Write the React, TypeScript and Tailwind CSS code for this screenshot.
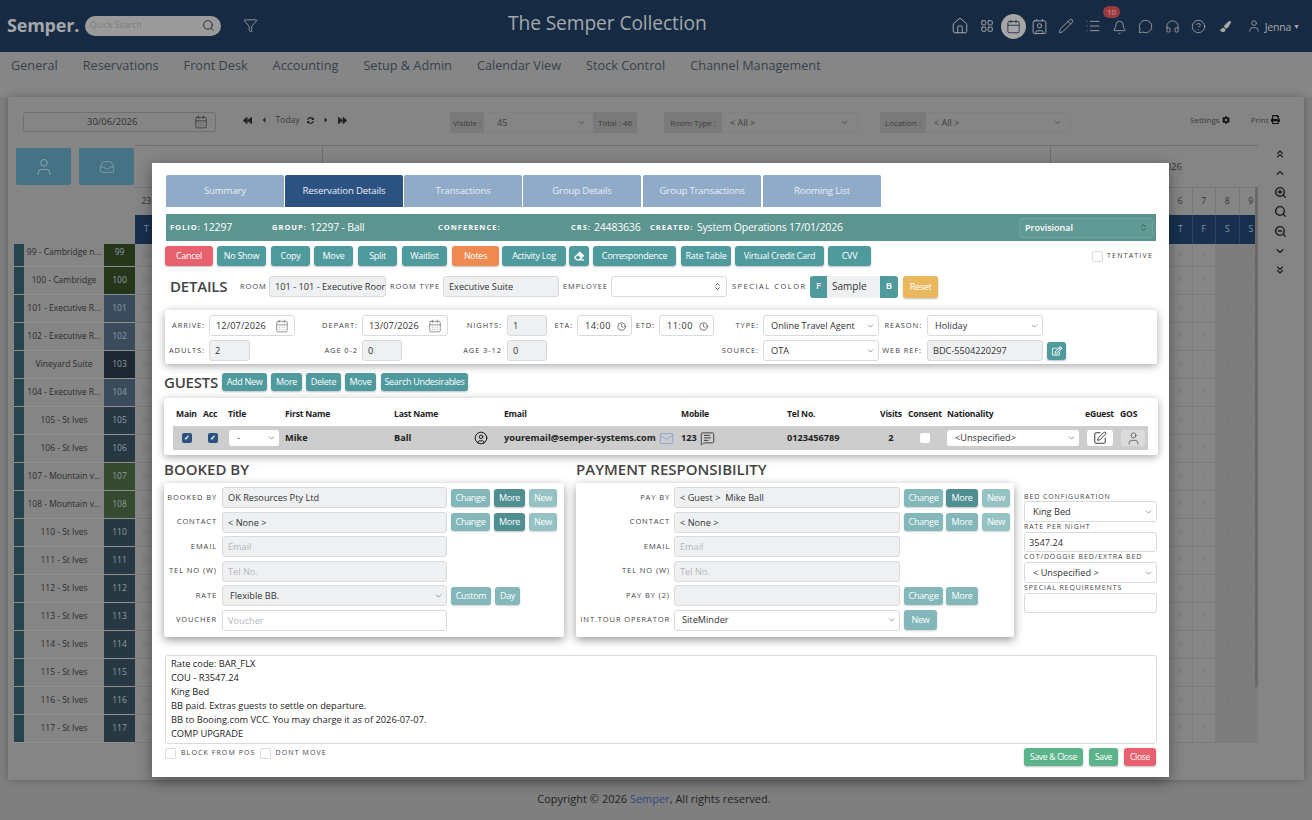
import React from "react";
import { twMerge } from "tailwind-merge";
import {
  Home, LayoutGrid, Calendar, CalendarDays, Contact, Pencil, List, Bell, MessageCircle, Headphones, CircleHelp, User, Search, Filter,
  ChevronsUp, ChevronUp, ZoomIn, ZoomOut, ChevronDown, ChevronsDown, Mail, Inbox, Clock, CircleUser, MessageSquareText, SquarePen, ChevronsUpDown,
} from "lucide-react";
import { FaBackward, FaForward, FaCaretLeft, FaCaretRight, FaSyncAlt, FaCog, FaPrint, FaEraser, FaPaintBrush, FaRegEdit } from "react-icons/fa";

const cx = (...a: (string | false | undefined)[]) => twMerge(a.filter(Boolean).join(" "));

function Label({ className, children }: { className?: string; children: React.ReactNode }) {
  return <span className={cx("text-[7.5px] tracking-[0.9px] uppercase text-[#444] whitespace-nowrap text-right shrink-0", className)}>{children}</span>;
}

function Btn({ className, children }: { className?: string; children: React.ReactNode }) {
  return (
    <button className={cx("h-[20px] rounded-[3px] bg-[#4f9a9c] text-white text-[9px] tracking-[-0.3px] flex items-center justify-center shrink-0 shadow-[0_1px_2px_rgba(0,0,0,0.25)]", className)}>
      {children}
    </button>
  );
}

function Box({ className, children, muted, placeholder }: { className?: string; children?: React.ReactNode; muted?: boolean; placeholder?: boolean }) {
  return (
    <div className={cx("h-[21px] rounded-[3px] border border-[#d8dbde] flex items-center px-[5px] pt-[1px] text-[9.2px] overflow-hidden whitespace-nowrap shrink-0", muted ? "bg-[#eef0f2]" : "bg-white", placeholder ? "text-[#b5b8bb]" : "text-[#333]", className)}>
      {children}
    </div>
  );
}

function Sel({ className, value, inner }: { className?: string; value: string; inner?: string }) {
  return (
    <div className={cx("relative h-[21px] rounded-[3px] border border-[#d8dbde] bg-white shrink-0 flex items-center", className)}>
      <select defaultValue={value} className={cx("block w-full h-[14px] appearance-none bg-transparent pl-[7px] py-0 leading-[14px] text-[9.2px] text-[#333]", inner)}>
        <option>{value}</option>
      </select>
      <ChevronDown size={9} strokeWidth={1.6} className="absolute right-[3px] top-1/2 -translate-y-1/2 text-[#555] pointer-events-none" />
    </div>
  );
}

function DateBox({ className, value }: { className?: string; value: string }) {
  return (
    <Box className={cx("justify-between tracking-[0.1px]", className)}>
      <span className="pl-[1px]">{value}</span>
      <CalendarDays size={14} strokeWidth={1.3} className="text-[#777]" />
    </Box>
  );
}

function TimeBox({ className, value }: { className?: string; value: string }) {
  return (
    <Box className={cx("justify-between pl-[7px]", className)}>
      <span className="tracking-[0.5px]">{value}</span>
      <Clock size={9} strokeWidth={1.6} className="text-[#222]" />
    </Box>
  );
}

const TAB = "w-[118px] h-[32px] flex items-center justify-center text-[9.7px] tracking-[-0.2px] text-[#e8eef5] bg-[#8fabc8] rounded-t-[2px]";

const IconCell = ({ children, className }: { children: React.ReactNode; className?: string }) => (
  <div className={cx("w-[26.5px] flex justify-center", className)}>{children}</div>
);

function TopBar() {
  return (
    <header className="h-[52px] bg-[#172a43] flex items-center text-[#a9a9a9]">
      <div className="w-[508px] flex items-center shrink-0 -mt-[1px]">
        <span className="ml-[7px] w-[78px] text-[18px] font-bold tracking-[-0.2px] text-[#a3a7ac]">Semper.</span>
        <div className="w-[136px] h-[20px] rounded-full bg-[#9b9b9b] flex items-center justify-between pl-[5px] pr-[6px]">
          <span className="text-[8.5px] text-[#7d7d7d]">Quick Search</span>
          <Search size={13} strokeWidth={1.6} className="text-[#222]" />
        </div>
        <Filter size={15} strokeWidth={1.3} className="ml-[22px] text-[#a9a9a9]" />
      </div>
      <div className="text-[19.2px] text-[#a3a7ac] font-medium tracking-[-0.1px] -mt-[6px]">The Semper Collection</div>
      <div className="ml-auto flex items-center pr-[12px]">
        <IconCell><Home size={18} strokeWidth={1.3} /></IconCell>
        <IconCell><LayoutGrid size={14} strokeWidth={1.6} /></IconCell>
        <IconCell className="items-center">
          <div className="w-[25px] h-[25px] rounded-full bg-[#a6a6a6] flex items-center justify-center">
            <Calendar size={15} strokeWidth={1.4} className="text-[#1f2f46]" />
          </div>
        </IconCell>
        <IconCell><Contact size={17} strokeWidth={1.3} /></IconCell>
        <IconCell><Pencil size={16} strokeWidth={1.3} /></IconCell>
        <IconCell><List size={16} strokeWidth={1.3} /></IconCell>
        <IconCell className="relative">
          <Bell size={15} strokeWidth={1.3} className="mt-[2px]" />
          <span className="absolute left-[-3px] top-[-12px] w-[17px] h-[12px] rounded-full bg-[#9d3a40] text-[#c99] text-[8px] flex items-center justify-center">10</span>
        </IconCell>
        <IconCell><MessageCircle size={15} strokeWidth={1.3} /></IconCell>
        <IconCell><Headphones size={15} strokeWidth={1.3} /></IconCell>
        <IconCell><CircleHelp size={15} strokeWidth={1.3} /></IconCell>
        <IconCell><FaPaintBrush size={11} /></IconCell>
        <div className="w-[22px] ml-[4px] flex justify-center"><User size={14} strokeWidth={1.3} /></div>
        <span className="text-[10.5px] tracking-[-0.2px] mt-[3px]">Jenna</span>
        <span className="text-[7px] ml-[2px] mt-[3px]">▼</span>
      </div>
    </header>
  );
}

const NAV = ["General", "Reservations", "Front Desk", "Accounting", "Setup & Admin", "Calendar View", "Stock Control", "Channel Management"];

const ROOMS: [string, string, string][] = [
  ["99 - Cambridge n...", "99", "bg-[#25361b]"],
  ["100 - Cambridge", "100", "bg-[#25361b]"],
  ["101 - Executive R...", "101", "bg-[#3a4c5b]"],
  ["102 - Executive R...", "102", "bg-[#3a4c5b]"],
  ["Vineyard Suite", "103", "bg-[#1e2833]"],
  ["104 - Executive R...", "104", "bg-[#3a4c5b]"],
  ["105 - St Ives", "105", "bg-[#283842]"],
  ["106 - St Ives", "106", "bg-[#283842]"],
  ["107 - Mountain v...", "107", "bg-[#354a2e]"],
  ["108 - Mountain v...", "108", "bg-[#354a2e]"],
  ["110 - St Ives", "110", "bg-[#283842]"],
  ["111 - St Ives", "111", "bg-[#283842]"],
  ["112 - St Ives", "112", "bg-[#283842]"],
  ["113 - St Ives", "113", "bg-[#283842]"],
  ["114 - St Ives", "114", "bg-[#283842]"],
  ["115 - St Ives", "115", "bg-[#283842]"],
  ["116 - St Ives", "116", "bg-[#283842]"],
  ["117 - St Ives", "117", "bg-[#283842]"],
];

const DOW = ["S", "M", "T", "W", "T", "F", "S"];
const COLS = Array.from({ length: 48 }, (_, i) => {
  const d = new Date(2026, 5, 23 + i);
  return { n: d.getDate(), w: DOW[d.getDay()], we: d.getDay() === 0 || d.getDay() === 6 };
});

function Backdrop() {
  return (
    <div className="bg-[#7f7f7f] h-[768px]">
      <nav className="h-[45px] flex items-start pl-[11px] pt-[3.5px] gap-[25px] text-[12.7px] text-[#36414d] bg-[#868686]">
        {NAV.map((n) => <span key={n} className="leading-[18px]">{n}</span>)}
      </nav>
      <section className="mx-[8px] h-[683px] bg-[#858585] shadow-[0_0_8px_rgba(0,0,0,0.25)] text-[#3c3c3c]">
        <div className="h-[48px] pt-[15px] pl-[15px] flex items-start text-[8px]">
          <div className="w-[193px] h-[20px] border border-[#6f6f6f] rounded-[3px] flex items-center justify-between pl-[63px] pr-[7px] text-[9.5px] text-[#2f2f2f]">
            <span>30/06/2026</span>
            <CalendarDays size={14} strokeWidth={1.3} className="text-[#333]" />
          </div>
          <div className="ml-[27px] w-[104px] h-[16px] flex items-center justify-between text-[#222]">
            <FaBackward size={9} /><FaCaretLeft size={8} /><span className="text-[8.5px] text-[#3c3c3c]">Today</span><FaSyncAlt size={7} /><FaCaretRight size={8} /><FaForward size={9} />
          </div>
          <div className="ml-[103px] w-[187px] h-[21px] flex bg-[#858585]">
            <div className="w-[34px] bg-[#7a7a7a] flex items-center justify-center">Visible :</div>
            <div className="flex-1 border-y border-[#808080] flex items-center justify-between pl-[13px] pr-[7px] text-[9px]"><span>45</span><ChevronDown size={9} /></div>
            <div className="w-[44px] bg-[#7a7a7a] flex items-center justify-center">Total : 46</div>
          </div>
          <div className="ml-[27px] w-[194px] h-[21px] flex">
            <div className="w-[58px] bg-[#7a7a7a] flex items-center justify-center">Room Type :</div>
            <div className="flex-1 border-y border-r border-[#808080] flex items-center justify-between px-[8px] text-[9px]"><span>&lt; All &gt;</span><ChevronDown size={9} /></div>
          </div>
          <div className="ml-[22px] w-[191px] h-[21px] flex">
            <div className="w-[46px] bg-[#7a7a7a] flex items-center justify-center">Location :</div>
            <div className="flex-1 border-y border-r border-[#808080] flex items-center justify-between px-[8px] text-[9px]"><span>&lt; All &gt;</span><ChevronDown size={9} /></div>
          </div>
          <div className="ml-[119px] flex items-center gap-[2px] h-[15px]">Settings <FaCog size={8} className="text-[#111]" /></div>
          <div className="ml-[21px] flex items-center gap-[2px] h-[15px]">Print <FaPrint size={9} className="text-[#111]" /></div>
        </div>
        <div className="flex">
          <div className="ml-[6px] w-[121px] shrink-0">
            <div className="h-[99px] pt-[3px] pl-[2px] flex gap-[8px] items-start">
              <div className="w-[55px] h-[37px] rounded-[2px] bg-[#457385] flex items-center justify-center"><User size={20} strokeWidth={1.1} className="text-[#8fa7b3]" /></div>
              <div className="w-[55px] h-[37px] rounded-[2px] bg-[#457385] flex items-center justify-center"><Inbox size={16} strokeWidth={1.1} className="text-[#8fa7b3]" /></div>
            </div>
            {ROOMS.map(([name, no, c], i) => (
              <div key={no} className={cx("flex text-[8.5px] border-b border-[#8f8f8f]", i === 0 ? "h-[23px]" : "h-[28px]")}>
                <div className="w-[10px] bg-[#27434d]" />
                <div className={cx("w-[80px] flex items-center justify-center whitespace-nowrap text-[#2c2c2c]", i === 0 && "pb-[5px]")}>{name}</div>
                <div className={cx("w-[31px] flex items-center justify-center text-[#8d9ca5]", c, i === 0 && "pb-[5px]")}>{no}</div>
              </div>
            ))}
          </div>
          <div className="relative w-[1123px] shrink-0 overflow-hidden">
            <div className="h-[42px] flex border-t border-[#6f6f6f] text-[9.5px] text-[#333]">
              <div className="w-[188px] border-r border-[#6f6f6f] pt-[14px] text-center">June 2026</div>
              <div className="w-[728px] border-r border-[#6f6f6f] pt-[14px] text-center">July 2026</div>
              <div className="w-[207px] pt-[14px] text-center">August 2026</div>
            </div>
            <div className="grid grid-cols-[repeat(48,23.5px)] h-[28px] border-t border-[#787878] text-[8.5px] text-[#333]">
              {COLS.map((c, i) => <div key={i} className="border-r border-[#787878] flex items-center justify-center">{c.n}</div>)}
            </div>
            <div className="grid grid-cols-[repeat(48,23.5px)] h-[29px] bg-[#18304e] text-[8.5px] text-[#7f93a8]">
              {COLS.map((c, i) => <div key={i} className="border-r border-[#2c4766] flex items-center justify-center">{c.w}</div>)}
            </div>
            {ROOMS.map(([, no], r) => (
              <div key={no} className={cx("grid grid-cols-[repeat(48,23.5px)] text-[7px] text-[#777]", r === 0 ? "h-[23px]" : "h-[28px]")}>
                {COLS.map((c, i) => (
                  <div key={i} className={cx("border-r border-b border-[#7c7c7c] flex items-center justify-center", c.we ? "bg-[#7d7d7d]" : "bg-[#868686]")}>{c.n}</div>
                ))}
              </div>
            ))}
            <div className="absolute right-0 top-[42px] w-[3px] h-[500px] bg-[#6a6a6a]" />
          </div>
          <div className="w-[20px] ml-[12px] h-[128px] mt-[3px] flex flex-col items-center justify-between text-[#1c1c1c] shrink-0">
            <ChevronsUp size={12} strokeWidth={2.2} />
            <ChevronUp size={12} strokeWidth={2.2} />
            <ZoomIn size={13} strokeWidth={2.6} />
            <Search size={13} strokeWidth={2.6} />
            <ZoomOut size={13} strokeWidth={2.6} />
            <ChevronDown size={12} strokeWidth={2.2} />
            <ChevronsDown size={12} strokeWidth={2.2} />
          </div>
        </div>
      </section>
    </div>
  );
}

const GUEST_GRID = "grid grid-cols-[27px_25px_57px_109px_110px_177px_106px_93px_28px_39px_138px_35px_31px]";
const BAR_LABEL = "text-[7.5px] tracking-[1px] font-bold";
const H3 = "h-[16px] leading-[16px] text-[15px] font-semibold text-[#444] whitespace-nowrap";
const CARD = "mt-[6px] h-[154px] rounded-[2px] bg-white shadow-[0_3px_10px_rgba(0,0,0,0.4)] pt-[4px] flex flex-col gap-[3.5px]";
const ROW = "flex items-center h-[21px]";
const SMALL = "h-[18px] opacity-70";

function Modal() {
  return (
    <div className="absolute left-[152px] top-[163px] w-[1017px] h-[614px] bg-white shadow-[0_4px_14px_rgba(0,0,0,0.4)] pl-[14px] pr-[13px] pt-[12px]">
      {/* tabs */}
      <div className="flex gap-[1px]">
        <div className={TAB}>Summary</div>
        <div className={cx(TAB, "bg-[#2c5282]")}>Reservation Details</div>
        <div className={TAB}>Transactions</div>
        <div className={TAB}>Group Details</div>
        <div className={cx(TAB, "ml-[1px]")}>Group Transactions</div>
        <div className={cx(TAB, "ml-[1px]")}>Rooming List</div>
      </div>
      {/* teal bar */}
      <div className="mt-[7px] h-[27px] bg-[#5c9590] flex items-center text-white text-[10.5px] tracking-[-0.2px]">
        <b className={cx("ml-[4px] w-[33px]", BAR_LABEL)}>FOLIO:</b><span className="w-[69px]">12297</span>
        <b className={cx("w-[38px]", BAR_LABEL)}>GROUP:</b><span className="w-[128px]">12297 - Ball</span>
        <b className={cx("w-[133px]", BAR_LABEL)}>CONFERENCE:</b>
        <b className={cx("w-[23px]", BAR_LABEL)}>CRS:</b><span className="w-[56px]">24483636</span>
        <b className={cx("w-[47px]", BAR_LABEL)}>CREATED:</b><span className="w-[322px]">System Operations 17/01/2026</span>
        <div className="w-[134px] h-[20px] rounded-[3px] bg-[#5f9a95] border border-[#6ea5a0] flex items-center justify-between pl-[5px] pr-[4px] text-[9px] font-semibold tracking-normal">
          <span>Provisional</span><ChevronsUpDown size={9} strokeWidth={2.2} className="text-[#2f4f4c]" />
        </div>
      </div>
      {/* action buttons */}
      <div className="mt-[5px] -ml-[1px] flex items-center">
        <Btn className="w-[48px] bg-[#e7626e]">Cancel</Btn>
        <Btn className="w-[49px] ml-[4px]">No Show</Btn>
        <Btn className="w-[39px] ml-[5px]">Copy</Btn>
        <Btn className="w-[39px] ml-[4px]">Move</Btn>
        <Btn className="w-[39px] ml-[5px]">Split</Btn>
        <Btn className="w-[45px] ml-[5px]">Waitlist</Btn>
        <Btn className="w-[47px] ml-[5px] bg-[#ee8a4f]">Notes</Btn>
        <Btn className="w-[64px] ml-[3px]">Activity Log</Btn>
        <Btn className="w-[20px] ml-[3px]"><FaEraser size={10} /></Btn>
        <Btn className="w-[83px] ml-[4px]">Correspondence</Btn>
        <Btn className="w-[50px] ml-[5px]">Rate Table</Btn>
        <Btn className="w-[89px] ml-[4px]">Virtual Credit Card</Btn>
        <Btn className="w-[43px] ml-[4px]">CVV</Btn>
        <div className="ml-auto flex items-center mr-[3px]">
          <span className="w-[11px] h-[11px] rounded-[2px] border border-[#d8dbde]" />
          <Label className="ml-[4px] tracking-[1.2px] text-[7px]">TENTATIVE</Label>
        </div>
      </div>
      {/* details row */}
      <div className="mt-[10px] flex items-center h-[21px]">
        <span className="ml-[4px] w-[70px] text-[15px] font-semibold text-[#444] tracking-[-0.2px]">DETAILS</span>
        <Label className="w-[25px] text-left">ROOM</Label>
        <Box muted className="ml-[4px] w-[117px] text-[#333]">101 - 101 - Executive Room</Box>
        <Label className="ml-[4px] w-[48px] text-left">ROOM TYPE</Label>
        <Box muted className="ml-[5px] w-[116px]">Executive Suite</Box>
        <Label className="ml-[4px] w-[44px] text-left">EMPLOYEE</Label>
        <div className="ml-[4px] w-[116px] h-[21px] border border-[#d8dbde] rounded-[3px] flex items-center justify-end pr-[4px]"><ChevronsUpDown size={9} strokeWidth={2} className="text-[#333]" /></div>
        <Label className="ml-[5px] w-[73px] text-left tracking-[1.5px]">SPECIAL COLOR</Label>
        <div className="ml-[5px] flex w-[88px] h-[22px] rounded-[3px] overflow-hidden text-[10px]">
          <span className="w-[17px] bg-[#4f9a9c] text-white text-[9.5px] font-semibold flex items-center justify-center">F</span>
          <span className="flex-1 bg-[#eef0f2] flex items-center pl-[5px] text-[#333]">Sample</span>
          <span className="w-[18px] bg-[#4f9a9c] text-white text-[9.5px] font-semibold flex items-center justify-center">B</span>
        </div>
        <Btn className="ml-[5px] w-[35px] h-[22px] bg-[#eab85c]">Reset</Btn>
      </div>
      {/* details card */}
      <div className="mt-[13px] -ml-[1px] w-[992px] h-[54px] rounded-[3px] bg-white shadow-[0_2px_8px_rgba(0,0,0,0.35)] pt-[5px] flex flex-col gap-[4px]">
        <div className="flex items-center">
          <Label className="w-[40px]">ARRIVE:</Label>
          <DateBox className="ml-[4px] w-[86px]" value="12/07/2026" />
          <Label className="w-[63px]">DEPART:</Label>
          <DateBox className="ml-[4px] w-[86px]" value="13/07/2026" />
          <Label className="w-[54px]">NIGHTS:</Label>
          <Box muted className="ml-[5px] w-[40px]">1</Box>
          <Label className="w-[26px]">ETA:</Label>
          <TimeBox className="ml-[4px] w-[55px]" value="14:00" />
          <Label className="w-[23px]">ETD:</Label>
          <TimeBox className="ml-[4px] w-[55px]" value="11:00" />
          <Label className="w-[45px]">TYPE:</Label>
          <Sel className="ml-[4px] w-[116px]" value="Online Travel Agent" />
          <Label className="w-[43px]">REASON:</Label>
          <Sel className="ml-[5px] w-[116px]" value="Holiday" />
        </div>
        <div className="flex items-center">
          <Label className="w-[40px]">ADULTS:</Label>
          <Box muted className="ml-[4px] w-[41px]">2</Box>
          <Label className="w-[108px]">AGE 0-2</Label>
          <Box muted className="ml-[4px] w-[40px]">0</Box>
          <Label className="w-[100px]">AGE 3-12</Label>
          <Box muted className="ml-[5px] w-[40px]">0</Box>
          <Label className="w-[212px]">SOURCE:</Label>
          <Sel className="ml-[4px] w-[116px]" value="OTA" />
          <Label className="w-[43px]">WEB REF:</Label>
          <Box muted className="ml-[5px] w-[116px]">BDC-5504220297</Box>
          <Btn className="ml-[4px] w-[19px] h-[18px]"><FaRegEdit size={10} /></Btn>
        </div>
      </div>
      {/* guests heading */}
      <div className="mt-[9px] -ml-[2px] h-[18px] flex items-center">
        <span className="w-[58px] text-[15px] font-semibold text-[#444] tracking-[-0.2px]">GUESTS</span>
        <Btn className="w-[45px] h-[18px]">Add New</Btn>
        <Btn className="w-[31px] h-[18px] ml-[4px]">More</Btn>
        <Btn className="w-[35px] h-[18px] ml-[4px]">Delete</Btn>
        <Btn className="w-[31px] h-[18px] ml-[4px]">Move</Btn>
        <Btn className="w-[87px] h-[18px] ml-[5px]">Search Undesirables</Btn>
      </div>
      {/* guests card */}
      <div className="mt-[7px] -ml-[2px] w-[994px] h-[57px] rounded-[3px] bg-white shadow-[0_2px_8px_rgba(0,0,0,0.35)] pl-[9px] pr-[10px] pt-[7px]">
        <div className={cx(GUEST_GRID, "h-[19px] mb-[2px] text-[8.6px] font-bold text-[#222] items-center")}>
          {["Main", "Acc", "Title", "First Name", "Last Name", "Email", "Mobile", "Tel No.", "Visits", "Consent", "Nationality", "eGuest", "GOS"].map((h) => (
            <span key={h} className="h-full flex items-center whitespace-nowrap tracking-[-0.2px] pl-[3px]">{h}</span>
          ))}
        </div>
        <div className={cx(GUEST_GRID, "h-[24px] bg-[#cdcdcd] text-[9.2px] font-bold text-[#222] items-center")}>
          <span className="flex justify-center"><span className="w-[10px] h-[10px] rounded-[2px] bg-[#2c5282] text-white text-[7px] leading-[10px] text-center">✓</span></span>
          <span className="flex justify-center"><span className="w-[10px] h-[10px] rounded-[2px] bg-[#2c5282] text-white text-[7px] leading-[10px] text-center">✓</span></span>
          <Sel className="ml-[4px] w-[50px] h-[16px] border-0" inner="pl-[8px] font-normal" value="-" />
          <span className="pl-[3px]">Mike</span>
          <span className="pl-[3px] flex items-center justify-between pr-[13px]">Ball<CircleUser size={14} strokeWidth={1.6} className="text-[#111]" /></span>
          <span className="pl-[3px] flex items-center whitespace-nowrap">youremail@semper-systems.com</span>
          <span className="pl-[3px] flex items-center gap-[3px] relative">123 <MessageSquareText size={15} strokeWidth={1.3} className="text-[#222]" /><Mail size={15} strokeWidth={1} className="absolute left-[-19px] top-[0px] text-[#6f8fd6]" /></span>
          <span className="pl-[3px]">0123456789</span>
          <span className="text-center">2</span>
          <span className="flex justify-center"><span className="w-[10px] h-[10px] rounded-[2px] bg-white" /></span>
          <Sel className="ml-[3px] w-[132px] h-[16px] border-0" inner="pl-[8px] font-normal" value="<Unspecified>" />
          <span className="pl-[5px]"><span className="w-[26px] h-[16px] rounded-[3px] bg-white flex items-center justify-center"><SquarePen size={14} strokeWidth={1.5} className="text-[#222]" /></span></span>
          <span className="pl-[4px]"><span className="w-[24px] h-[16px] rounded-[3px] bg-[#dcdcdc] flex items-center justify-center"><User size={15} strokeWidth={1.1} className="text-[#444]" /></span></span>
        </div>
      </div>
      {/* lower */}
      <div className="mt-[6px] -ml-[2px] flex items-start">
        <div className="w-[400px] shrink-0">
          <h3 className={H3}>BOOKED BY</h3>
          <div className={CARD}>
            <div className={ROW}><Label className="w-[53px]">BOOKED BY</Label><Box muted className="ml-[5px] w-[225px]">OK Resources Pty Ltd</Box><Btn className={cx("ml-[4px] w-[39px]", SMALL)}>Change</Btn><Btn className="ml-[4px] w-[31px] h-[18px] bg-[#4f8f92]">More</Btn><Btn className={cx("ml-[4px] w-[28px]", SMALL, "opacity-60")}>New</Btn></div>
            <div className={ROW}><Label className="w-[53px]">CONTACT</Label><Box muted className="ml-[5px] w-[225px]">&lt; None &gt;</Box><Btn className={cx("ml-[4px] w-[39px]", SMALL)}>Change</Btn><Btn className="ml-[4px] w-[31px] h-[18px] bg-[#4f8f92]">More</Btn><Btn className={cx("ml-[4px] w-[28px]", SMALL, "opacity-60")}>New</Btn></div>
            <div className={ROW}><Label className="w-[53px]">EMAIL</Label><Box muted placeholder className="ml-[5px] w-[225px]">Email</Box></div>
            <div className={ROW}><Label className="w-[53px]">TEL NO (W)</Label><Box muted placeholder className="ml-[5px] w-[225px]">Tel No.</Box></div>
            <div className={ROW}><Label className="w-[53px]">RATE</Label><Sel className="ml-[5px] w-[225px] bg-[#eef0f2]" value="Flexible BB." /><Btn className={cx("ml-[4px] w-[40px]", SMALL)}>Custom</Btn><Btn className={cx("ml-[4px] w-[25px]", SMALL)}>Day</Btn></div>
            <div className={ROW}><Label className="w-[53px]">VOUCHER</Label><Box placeholder className="ml-[5px] w-[225px]">Voucher</Box></div>
          </div>
        </div>
        <div className="ml-[12px] w-[438px] shrink-0">
          <h3 className={H3}>PAYMENT RESPONSIBILITY</h3>
          <div className={CARD}>
            <div className={ROW}><Label className="w-[94px]">PAY BY</Label><Box muted className="ml-[4px] w-[226px]">&lt; Guest &gt;&nbsp; Mike Ball</Box><Btn className={cx("ml-[4px] w-[39px]", SMALL)}>Change</Btn><Btn className="ml-[3px] w-[32px] h-[18px] bg-[#4f8f92]">More</Btn><Btn className={cx("ml-[4px] w-[28px]", SMALL, "opacity-60")}>New</Btn></div>
            <div className={ROW}><Label className="w-[94px]">CONTACT</Label><Box muted className="ml-[4px] w-[226px]">&lt; None &gt;</Box><Btn className={cx("ml-[4px] w-[39px]", SMALL)}>Change</Btn><Btn className={cx("ml-[3px] w-[32px]", SMALL)}>More</Btn><Btn className={cx("ml-[4px] w-[28px]", SMALL, "opacity-60")}>New</Btn></div>
            <div className={ROW}><Label className="w-[94px]">EMAIL</Label><Box muted placeholder className="ml-[4px] w-[226px]">Email</Box></div>
            <div className={ROW}><Label className="w-[94px]">TEL NO (W)</Label><Box muted placeholder className="ml-[4px] w-[226px]">Tel No.</Box></div>
            <div className={ROW}><Label className="w-[94px]">PAY BY (2)</Label><Box muted className="ml-[4px] w-[226px]" /><Btn className={cx("ml-[4px] w-[39px]", SMALL)}>Change</Btn><Btn className={cx("ml-[3px] w-[32px]", SMALL)}>More</Btn></div>
            <div className={ROW}><Label className="w-[94px]">INT.TOUR OPERATOR</Label><Sel className="ml-[4px] w-[226px]" value="SiteMinder" /><Btn className="ml-[4px] w-[33px] h-[20px] opacity-70">New</Btn></div>
          </div>
        </div>
        <div className="ml-[10px] w-[133px] shrink-0 pt-[31px] flex flex-col">
          <Label className="text-left h-[9px] leading-[9px] text-[7px]">BED CONFIGURATION</Label>
          <Sel className="w-[133px]" inner="pl-[8px]" value="King Bed" />
          <Label className="text-left h-[10px] leading-[10px] text-[7px]">RATE PER NIGHT</Label>
          <Box className="w-[133px] h-[20px] pl-[4px]">3547.24</Box>
          <Label className="text-left h-[10px] leading-[10px] text-[7px]">COT/DOGGIE BED/EXTRA BED</Label>
          <Sel className="w-[133px]" inner="pl-[8px]" value="< Unspecified >" />
          <Label className="text-left h-[10px] leading-[10px] text-[7px]">SPECIAL REQUIREMENTS</Label>
          <Box className="w-[133px] h-[20px]" />
        </div>
      </div>
      {/* notes */}
      <div className="mt-[18px] -ml-[1px] w-[992px] h-[89px] border border-[#d8dbde] rounded-[3px] px-[5px] pt-[1px] text-[9.3px] leading-[14px] text-[#222]">
        <div>Rate code: BAR_FLX</div>
        <div>COU - R3547.24</div>
        <div>King Bed</div>
        <div>BB paid. Extras guests to settle on departure.</div>
        <div>BB to Booing.com VCC. You may charge it as of 2026-07-07.</div>
        <div>COMP UPGRADE</div>
      </div>
      <div className="mt-[3px] -ml-[1px] w-[991px] flex items-start">
        <div className="flex items-center h-[13px]">
          <span className="w-[11px] h-[11px] rounded-[2px] border border-[#d8dbde]" />
          <Label className="ml-[5px] tracking-[1.1px] text-[7px]">BLOCK FROM POS</Label>
          <span className="ml-[4px] w-[11px] h-[11px] rounded-[2px] border border-[#d8dbde]" />
          <Label className="ml-[5px] tracking-[1.1px] text-[7px]">DONT MOVE</Label>
        </div>
        <Btn className="ml-auto mt-[1px] w-[59px] h-[18px] bg-[#5cb58a] text-[8.5px]">Save &amp; Close</Btn>
        <Btn className="ml-[6px] mt-[1px] w-[29px] h-[18px] bg-[#5cb58a] text-[8.5px]">Save</Btn>
        <Btn className="ml-[6px] mt-[1px] w-[32px] h-[18px] bg-[#e7626e] text-[8.5px]">Close</Btn>
      </div>
    </div>
  );
}

export default function App() {
  return (
    <div className="relative w-[1312px] h-[820px] overflow-hidden bg-[#7f7f7f] font-['Open_Sans',sans-serif]">
      <TopBar />
      <Backdrop />
      <Modal />
      <footer className="h-[52px] -mt-[52px] pt-[23px] text-center text-[11px] text-[#222] relative -left-[2px]">
        Copyright © 2026 <span className="text-[#2a4a80]">Semper</span>, All rights reserved.
      </footer>
    </div>
  );
}
